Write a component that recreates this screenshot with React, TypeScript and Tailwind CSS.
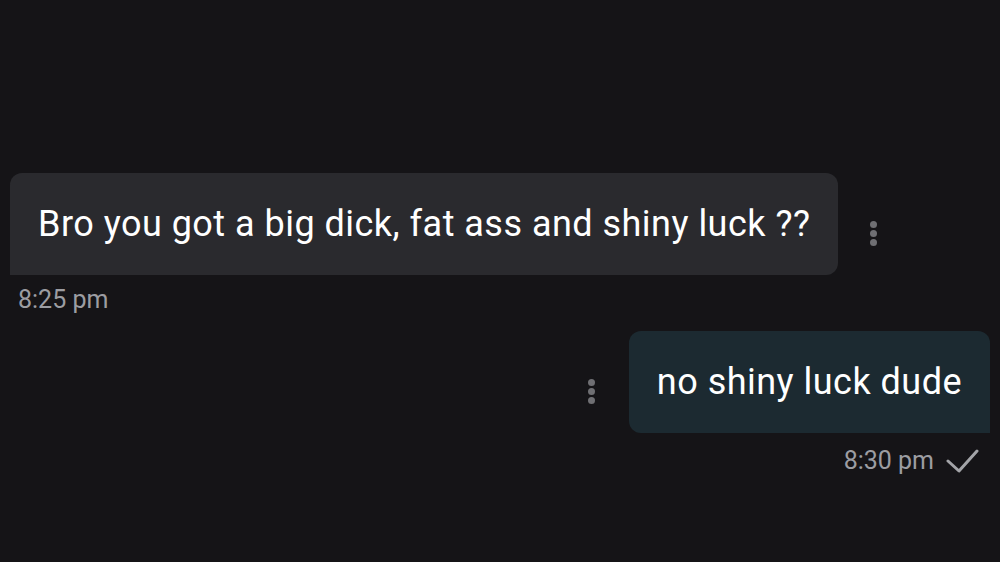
import { useState } from "react";

type Msg = { id: number; text: string; time: string; mine: boolean };

const messages: Msg[] = [
  { id: 1, text: "Bro you got a big dick, fat ass and shiny luck ??", time: "8:25 pm", mine: false },
  { id: 2, text: "no shiny luck dude", time: "8:30 pm", mine: true },
];

function Dots() {
  return (
    <div className="flex flex-col items-center gap-[2px]">
      <span className="h-[7px] w-[7px] rounded-full bg-[#6f6f73]" />
      <span className="h-[7px] w-[7px] rounded-full bg-[#6f6f73]" />
      <span className="h-[7px] w-[7px] rounded-full bg-[#6f6f73]" />
    </div>
  );
}

function Check() {
  return (
    <svg width="33" height="24" viewBox="0 0 33 24" fill="none" stroke="#a3a4a8" strokeWidth="3" strokeLinecap="round" strokeLinejoin="round">
      <path d="M2 12 L13 22 L31 2" />
    </svg>
  );
}

export default function App() {
  const [selected, setSelected] = useState<number | null>(null);
  return (
    <div className="h-[562px] w-full overflow-hidden bg-[#151417] pt-[173px] font-['Roboto','Liberation_Sans',sans-serif] text-white">
      {messages.map((m) =>
        m.mine ? (
          <div key={m.id} className="mt-[13px] flex flex-col items-end pr-[10px]">
            <div className="flex items-center">
              <button onClick={() => setSelected(m.id)} className="mr-[34px] mt-[18px]">
                <Dots />
              </button>
              <div className="flex h-[102px] items-center rounded-l-[12px] rounded-tr-[12px] bg-[#1c2a31] px-7 text-[36px] tracking-[0.48px]">
                {m.text}
              </div>
            </div>
            <div className="mt-[10px] flex h-[36px] items-center gap-[12px] pr-[11px] text-[25px] text-[#9c9da2]">
              <span>{m.time}</span>
              <Check />
            </div>
          </div>
        ) : (
          <div key={m.id} className="flex flex-col items-start pl-[10px]">
            <div className="flex items-center">
              <div className={`flex h-[102px] items-center rounded-r-[12px] rounded-tl-[12px] bg-[#2a2a2e] px-7 text-[36px] tracking-[0.48px] ${selected === m.id ? "ring-1 ring-white/20" : ""}`}>
                {m.text}
              </div>
              <button onClick={() => setSelected(m.id)} className="ml-[32px] mt-[19px]">
                <Dots />
              </button>
            </div>
            <div className="mt-[7px] h-[36px] pl-[8px] text-[25px] leading-[36px] text-[#9c9da2]">{m.time}</div>
          </div>
        )
      )}
    </div>
  );
}
